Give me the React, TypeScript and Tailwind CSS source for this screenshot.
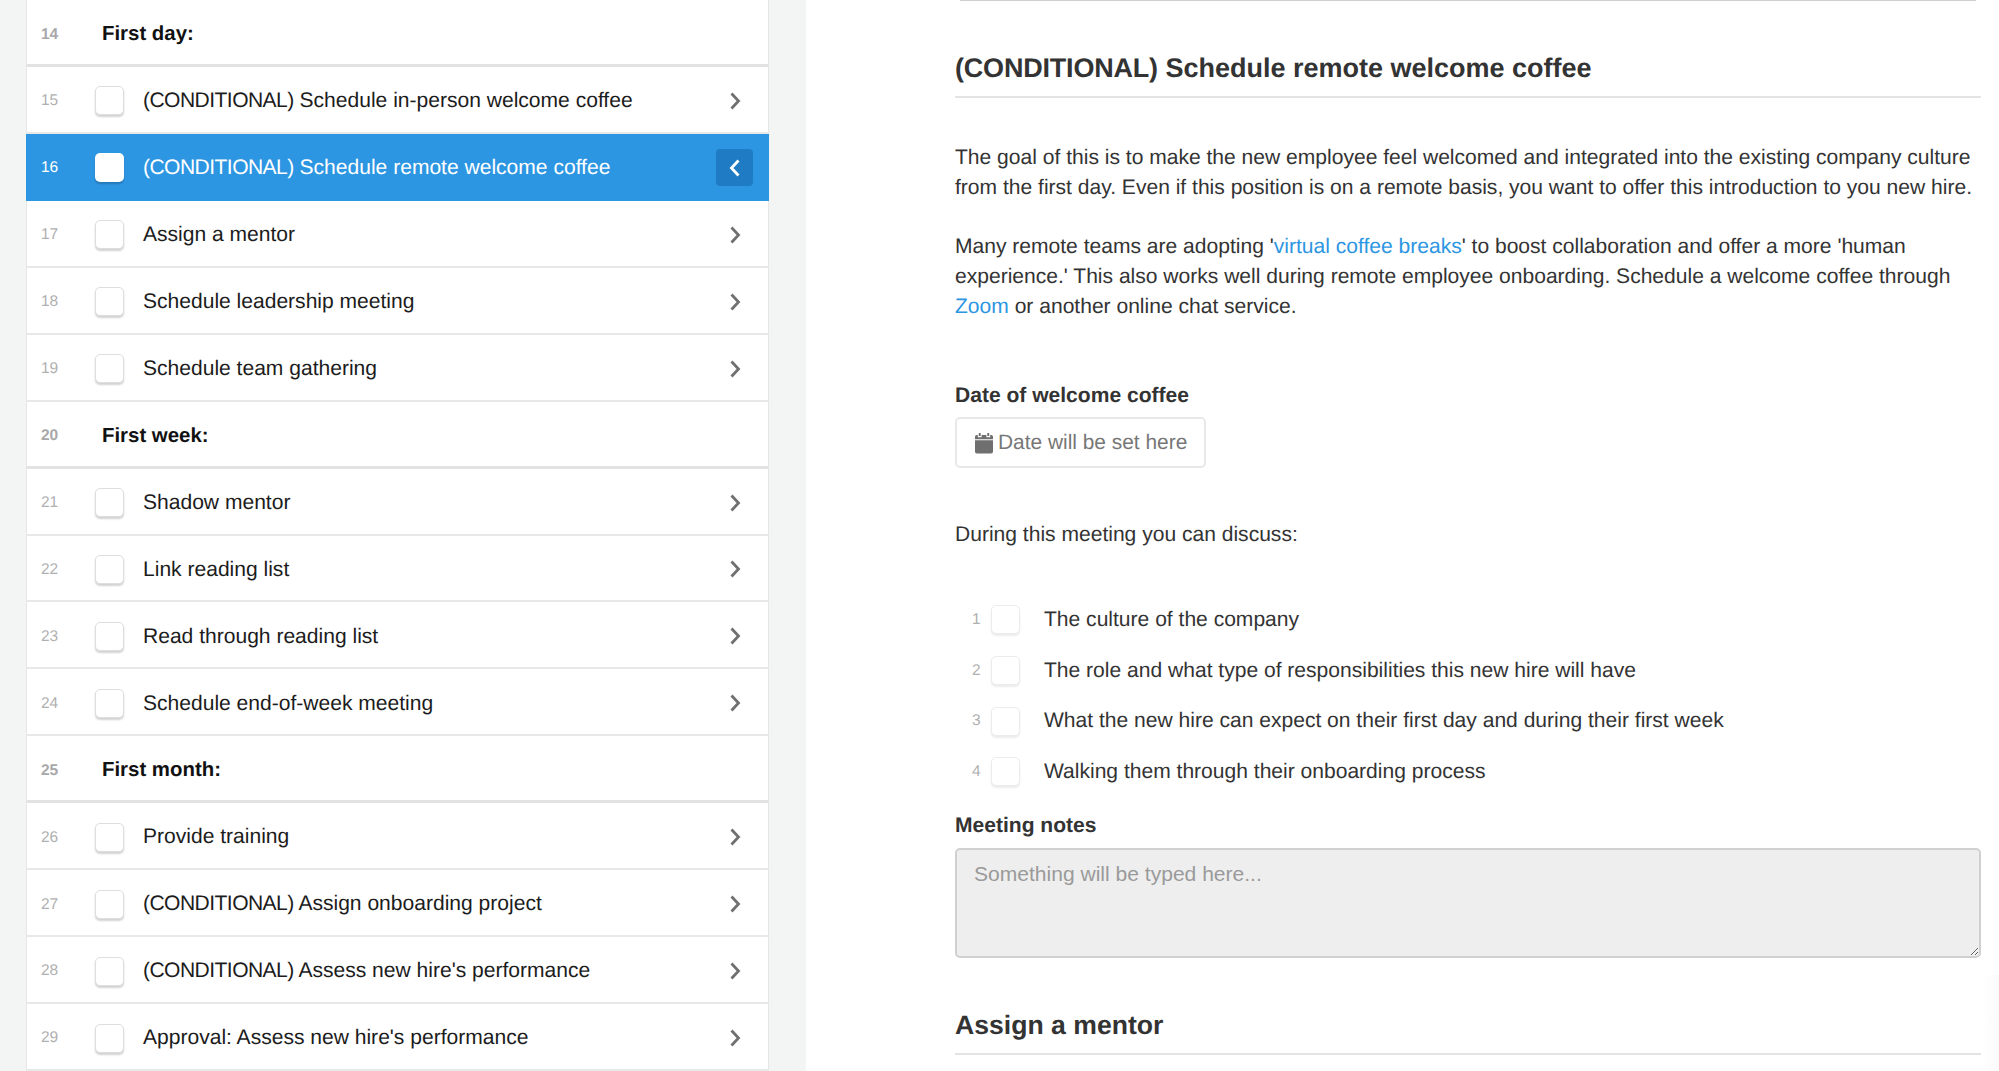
import React from "react";

type Row = { n: number; text: string; head?: boolean; active?: boolean };

const rows: Row[] = [
  { n: 14, text: "First day:", head: true },
  { n: 15, text: "(CONDITIONAL) Schedule in-person welcome coffee" },
  { n: 16, text: "(CONDITIONAL) Schedule remote welcome coffee", active: true },
  { n: 17, text: "Assign a mentor" },
  { n: 18, text: "Schedule leadership meeting" },
  { n: 19, text: "Schedule team gathering" },
  { n: 20, text: "First week:", head: true },
  { n: 21, text: "Shadow mentor" },
  { n: 22, text: "Link reading list" },
  { n: 23, text: "Read through reading list" },
  { n: 24, text: "Schedule end-of-week meeting" },
  { n: 25, text: "First month:", head: true },
  { n: 26, text: "Provide training" },
  { n: 27, text: "(CONDITIONAL) Assign onboarding project" },
  { n: 28, text: "(CONDITIONAL) Assess new hire's performance" },
  { n: 29, text: "Approval: Assess new hire's performance" },
];

const items = [
  "The culture of the company",
  "The role and what type of responsibilities this new hire will have",
  "What the new hire can expect on their first day and during their first week",
  "Walking them through their onboarding process",
];

function Chevron({ left, color }: { left?: boolean; color: string }) {
  return (
    <svg width="12" height="18" viewBox="0 0 12 18" fill="none">
      <path
        d={left ? "M9.5 1.5 L2.5 9 L9.5 16.5" : "M2.5 1.5 L9.5 9 L2.5 16.5"}
        stroke={color}
        strokeWidth="2.8"
        strokeLinejoin="miter"
      />
    </svg>
  );
}

function RowLabel({ text }: { text: string }) {
  const tag = "(CONDITIONAL)";
  if (!text.startsWith(tag)) return <>{text}</>;
  return (
    <>
      <span className="tracking-[-0.55px]">{tag}</span>
      {text.slice(tag.length)}
    </>
  );
}

function ListRow({ row }: { row: Row }) {
  if (row.head) {
    return (
      <div className="flex h-[66.95px] shrink-0 items-center border-x border-b-[3px] border-x-[#e6e6e6] border-b-[#e3e3e3] bg-white pl-[14px] pt-[5px]">
        <span className="w-[61px] text-[15.5px] font-bold text-[#a8a8a8]">{row.n}</span>
        <span className="text-[20.4px] font-bold text-[#111]">{row.text}</span>
      </div>
    );
  }
  return (
    <div
      className={
        row.active
          ? "flex h-[66.95px] shrink-0 items-center border-x border-[#2d96e2] bg-[#2d96e2] pl-[14px] pr-[15px] pt-[1px]"
          : "flex h-[66.95px] shrink-0 items-center border-x border-b-2 border-x-[#e6e6e6] border-b-[#e8e8e8] bg-white pl-[14px] pr-[15px] pt-[3px]"
      }
    >
      <span className={row.active ? "w-[54px] text-[15.5px] text-white" : "w-[54px] text-[15.5px] text-[#b0b0b0]"}>{row.n}</span>
      <span
        className={
          row.active
            ? "h-[29px] w-[29px] shrink-0 rounded-[5px] bg-white shadow-[0_2px_2px_rgba(0,0,0,0.2)]"
            : "h-[29px] w-[29px] shrink-0 rounded-[5px] border border-[#dedede] bg-white shadow-[0_2px_2px_rgba(0,0,0,0.18)]"
        }
      />
      <span className={row.active ? "ml-[19px] flex-1 text-[21.05px] text-white" : "ml-[19px] flex-1 text-[21.05px] text-[#1c1c1c]"}>
        <RowLabel text={row.text} />
      </span>
      <span
        className={
          row.active
            ? "flex h-[37px] w-[37px] items-center justify-center rounded-[4px] bg-[#1f7cc4]"
            : "flex h-[37px] w-[37px] items-center justify-center"
        }
      >
        <Chevron left={row.active} color={row.active ? "#ffffff" : "#707070"} />
      </span>
    </div>
  );
}

export default function App() {
  return (
    <div className="relative flex h-[1071px] w-[1999px] overflow-hidden bg-white font-['Liberation_Sans',Arial,sans-serif] text-[#333] [text-rendering:geometricPrecision]">
      <aside className="h-full w-[806px] shrink-0 bg-[#f3f4f4] pl-[26px]">
        <div className="flex w-[743px] flex-col">
          {rows.map((r) => (
            <ListRow key={r.n} row={r} />
          ))}
        </div>
      </aside>
      <main className="flex-1 pl-[149px]">
        <div className="w-[1026px]">
          <div className="mx-[5px] h-px bg-[#cfcfcf]" />
          <h2 className="h-[97px] border-b-2 border-[#e3e3e3] pt-[39px] text-[27px] font-bold leading-[56px]">
            <span className="tracking-[-0.2px]">(CONDITIONAL)</span> Schedule remote welcome coffee
          </h2>
          <p className="mt-[45px] text-[21.05px] leading-[29.7px]">
            The goal of this is to make the new employee feel welcomed and integrated into the existing company culture from the first day. Even if this position is on a remote basis, you want to offer this introduction to you new hire.
          </p>
          <p className="mt-[30px] text-[21.05px] leading-[29.7px]">
            Many remote teams are adopting '<span className="text-[#2d96e2]">virtual coffee breaks</span>' to boost collaboration and offer a more 'human experience.' This also works well during remote employee onboarding. Schedule a welcome coffee through <span className="text-[#2d96e2]">Zoom</span> or another online chat service.
          </p>
          <div className="mt-[62px] text-[21.05px] font-bold leading-[24px]">Date of welcome coffee</div>
          <div className="mt-[9px] flex h-[51px] w-[251px] items-center gap-[5px] rounded-[5px] border-2 border-[#e8e8e8] bg-white pl-[18px] pt-[1px] text-[20.9px] text-[#777]">
            <svg width="18" height="22" viewBox="0 0 19 22" fill="#6f6f6f">
              <path d="M4 0.5h2v3H4zM13 0.5h2v3h-2z" />
              <path d="M2 2.5h1v2.5h4V2.5h5v2.5h4V2.5h1a2 2 0 0 1 2 2V7H0V4.5a2 2 0 0 1 2-2z" />
              <path d="M0 8h19v12a2 2 0 0 1-2 2H2a2 2 0 0 1-2-2z" />
            </svg>
            Date will be set here
          </div>
          <p className="mt-[52px] text-[21.05px] leading-[30px]">During this meeting you can discuss:</p>
          <ul className="mt-[45px]">
            {items.map((t, i) => (
              <li key={t} className="flex h-[50.6px] items-center pl-[17px]">
                <span className="w-[19px] text-[15.5px] text-[#b0b0b0]">{i + 1}</span>
                <span className="h-[29px] w-[29px] shrink-0 rounded-[5px] border border-[#ececec] bg-white shadow-[0_2px_2px_rgba(0,0,0,0.08)]" />
                <span className="ml-[24px] text-[21.05px]">{t}</span>
              </li>
            ))}
          </ul>
          <div className="mt-[17.5px] text-[21.05px] font-bold leading-[24px]">Meeting notes</div>
          <textarea
            readOnly
            placeholder="Something will be typed here..."
            className="mt-[10px] block h-[110px] w-full rounded-[5px] border-2 border-[#d0d0d0] bg-[#eeeeee] pl-[17px] pt-[8.5px] text-[21.05px] leading-[30px] placeholder:text-[#9a9a9a]"
          />
          <h2 className="mt-[39px] h-[58px] border-b-2 border-[#e3e3e3] text-[26.6px] font-bold leading-[56px]">Assign a mentor</h2>
        </div>
      </main>
      <div className="absolute bottom-0 right-0 h-[96px] w-[16px] bg-gradient-to-l from-[#fafafa] to-transparent" />
    </div>
  );
}
